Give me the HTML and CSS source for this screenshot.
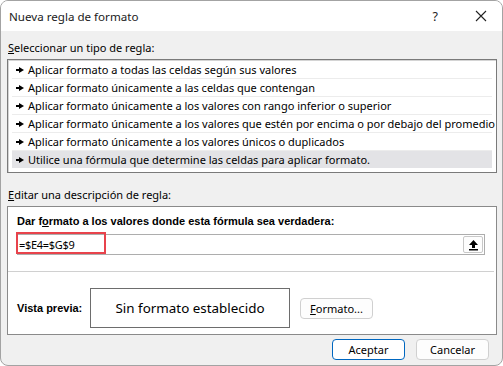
FILE: index.html
```html
<!DOCTYPE html>
<html lang="es">
<head>
    <meta charset="UTF-8">
    <title>Nueva regla de formato</title>
    <link rel="stylesheet" href="styles.css">
</head>
<body>
    <div class="dialog">
        <div class="titlebar">
            <span class="title">Nueva regla de formato</span>
            <span class="help">?</span>
            <svg class="close" width="12" height="12" viewBox="0 0 12 12"><path d="M1 1 L11 11 M11 1 L1 11" stroke="#222" stroke-width="1.1" fill="none"/></svg>
        </div>
        <div class="content">
            <div class="label"><u>S</u>eleccionar un tipo de regla:</div>
            <ul class="rule-list">
                <li><span class="arrow"></span>Aplicar formato a todas las celdas según sus valores</li>
                <li><span class="arrow"></span>Aplicar formato únicamente a las celdas que contengan</li>
                <li><span class="arrow"></span>Aplicar formato únicamente a los valores con rango inferior o superior</li>
                <li><span class="arrow"></span>Aplicar formato únicamente a los valores que estén por encima o por debajo del promedio</li>
                <li><span class="arrow"></span>Aplicar formato únicamente a los valores únicos o duplicados</li>
                <li class="selected"><span class="arrow"></span>Utilice una fórmula que determine las celdas para aplicar formato.</li>
            </ul>
            <div class="label label-edit"><u>E</u>ditar una descripción de regla:</div>
            <div class="desc-panel">
                <div class="bold-label">Dar f<u>o</u>rmato a los valores donde esta fórmula sea verdadera:</div>
                <div class="formula-box">
                    <span class="formula-text">=$E4=$G$9</span>
                    <span class="collapse-btn">
                        <svg width="11" height="12" viewBox="0 0 11 12"><path d="M5.5 1 L10 6 L7 6 L7 9 L4 9 L4 6 L1 6 Z" fill="#000"/><rect x="1" y="10" width="9" height="1.5" fill="#000"/></svg>
                    </span>
                    <span class="highlight"></span>
                </div>
                <div class="separator"></div>
                <div class="preview-row">
                    <span class="bold-label">Vista previa:</span>
                    <div class="preview-box">Sin formato establecido</div>
                    <button class="btn"><u>F</u>ormato...</button>
                </div>
            </div>
            <div class="buttons">
                <button class="btn btn-primary">Aceptar</button>
                <button class="btn">Cancelar</button>
            </div>
        </div>
    </div>
</body>
</html>
```

FILE: styles.css
```css
body {
    margin: 0;
    background: #ffffff;
    font-family: "Noto Sans", "Open Sans", sans-serif;
    font-size: 11px;
    color: #000;
}
.dialog {
    width: 503px;
    height: 366px;
    box-sizing: border-box;
    border: 1px solid #a3a3a3;
    border-radius: 8px;
    overflow: hidden;
    background: #f0f0f0;
    display: flex;
    flex-direction: column;
}
.titlebar {
    height: 30px;
    background: #ffffff;
    display: flex;
    align-items: center;
    padding-left: 8px;
}
.title {
    flex: 1;
    font-size: 11.6px;
    color: #1a1a1a;
}
.help {
    font-size: 12.5px;
    margin-right: 37px;
    color: #222;
}
.close {
    margin-right: 15px;
}
.content {
    padding: 9px 5px 0 6px;
    display: flex;
    flex-direction: column;
}
.label {
    height: 16px;
    line-height: 16px;
    padding-left: 1px;
}
.label-edit {
    margin-top: 14px;
}
.rule-list {
    list-style: none;
    margin: 3px 0 0 0;
    padding: 1px 5px;
    height: 110px;
    background: #ffffff;
    border: 1px solid #7a7a7a;
    box-shadow: inset 1px 1px 0 #d4d4d4;
}
.rule-list li {
    height: 17px;
    line-height: 17px;
    border-bottom: 1px solid #ececec;
    display: flex;
    align-items: center;
    white-space: nowrap;
    margin: 0 -1px;
    padding-left: 4px;
}
.rule-list li:last-child {
    border-bottom: none;
}
.rule-list li.selected {
    background: #e3e3e6;
}
.arrow {
    flex-shrink: 0;
    display: inline-block;
    width: 8px;
    height: 6px;
    margin-right: 4px;
    background: linear-gradient(#000, #000) 0 2px / 4px 2px no-repeat;
    position: relative;
}
.arrow::after {
    content: "";
    position: absolute;
    left: 3px;
    top: 0;
    border-left: 5px solid #000;
    border-top: 3px solid transparent;
    border-bottom: 3px solid transparent;
}
.desc-panel {
    margin-top: 3px;
    height: 127px;
    background: #ffffff;
    border: 1px solid #8a8a8a;
    display: flex;
    flex-direction: column;
}
.bold-label {
    font-family: "Liberation Sans", Arial, sans-serif;
    font-size: 11px;
    font-weight: bold;
    white-space: nowrap;
}
.desc-panel > .bold-label {
    margin: 6px 0 0 9px;
    height: 16px;
    line-height: 16px;
}
.formula-box {
    position: relative;
    margin: 5px 11px 0 9px;
    height: 19px;
    border: 1px solid #adadad;
    display: flex;
    align-items: center;
    justify-content: space-between;
}
.formula-text {
    padding-left: 1px;
    font-size: 11px;
    letter-spacing: -0.3px;
}
.collapse-btn {
    width: 18px;
    height: 15px;
    margin-right: 1px;
    border: 1px solid #c8c8c8;
    border-radius: 2px;
    background: #fdfdfd;
    display: flex;
    align-items: center;
    justify-content: center;
}
.highlight {
    position: absolute;
    left: -2px;
    top: -3px;
    width: 86px;
    height: 18px;
    border: 2.5px solid #e8434c;
}
.separator {
    margin-top: 16px;
    margin-right: 2px;
    height: 1px;
    background: #d0d0d0;
}
.preview-row {
    margin-top: 16px;
    padding-left: 9px;
    display: flex;
    align-items: center;
}
.preview-row .bold-label {
    width: 73px;
}
.preview-box {
    width: 198px;
    height: 38px;
    border: 1px solid #6d6d6d;
    display: flex;
    align-items: center;
    justify-content: center;
    font-size: 13.4px;
}
.btn {
    font-family: inherit;
    font-size: 11px;
    height: 21px;
    width: 73px;
    padding: 0;
    background: #fdfdfd;
    border: 1px solid #d0d0d0;
    border-radius: 4px;
    color: #000;
}
.preview-row .btn {
    margin-left: 10px;
}
.buttons {
    margin-top: 4px;
    padding-right: 8px;
    display: flex;
    justify-content: flex-end;
    gap: 11px;
}
.btn-primary {
    border-color: #0067c0;
    background: #ffffff;
}
```
